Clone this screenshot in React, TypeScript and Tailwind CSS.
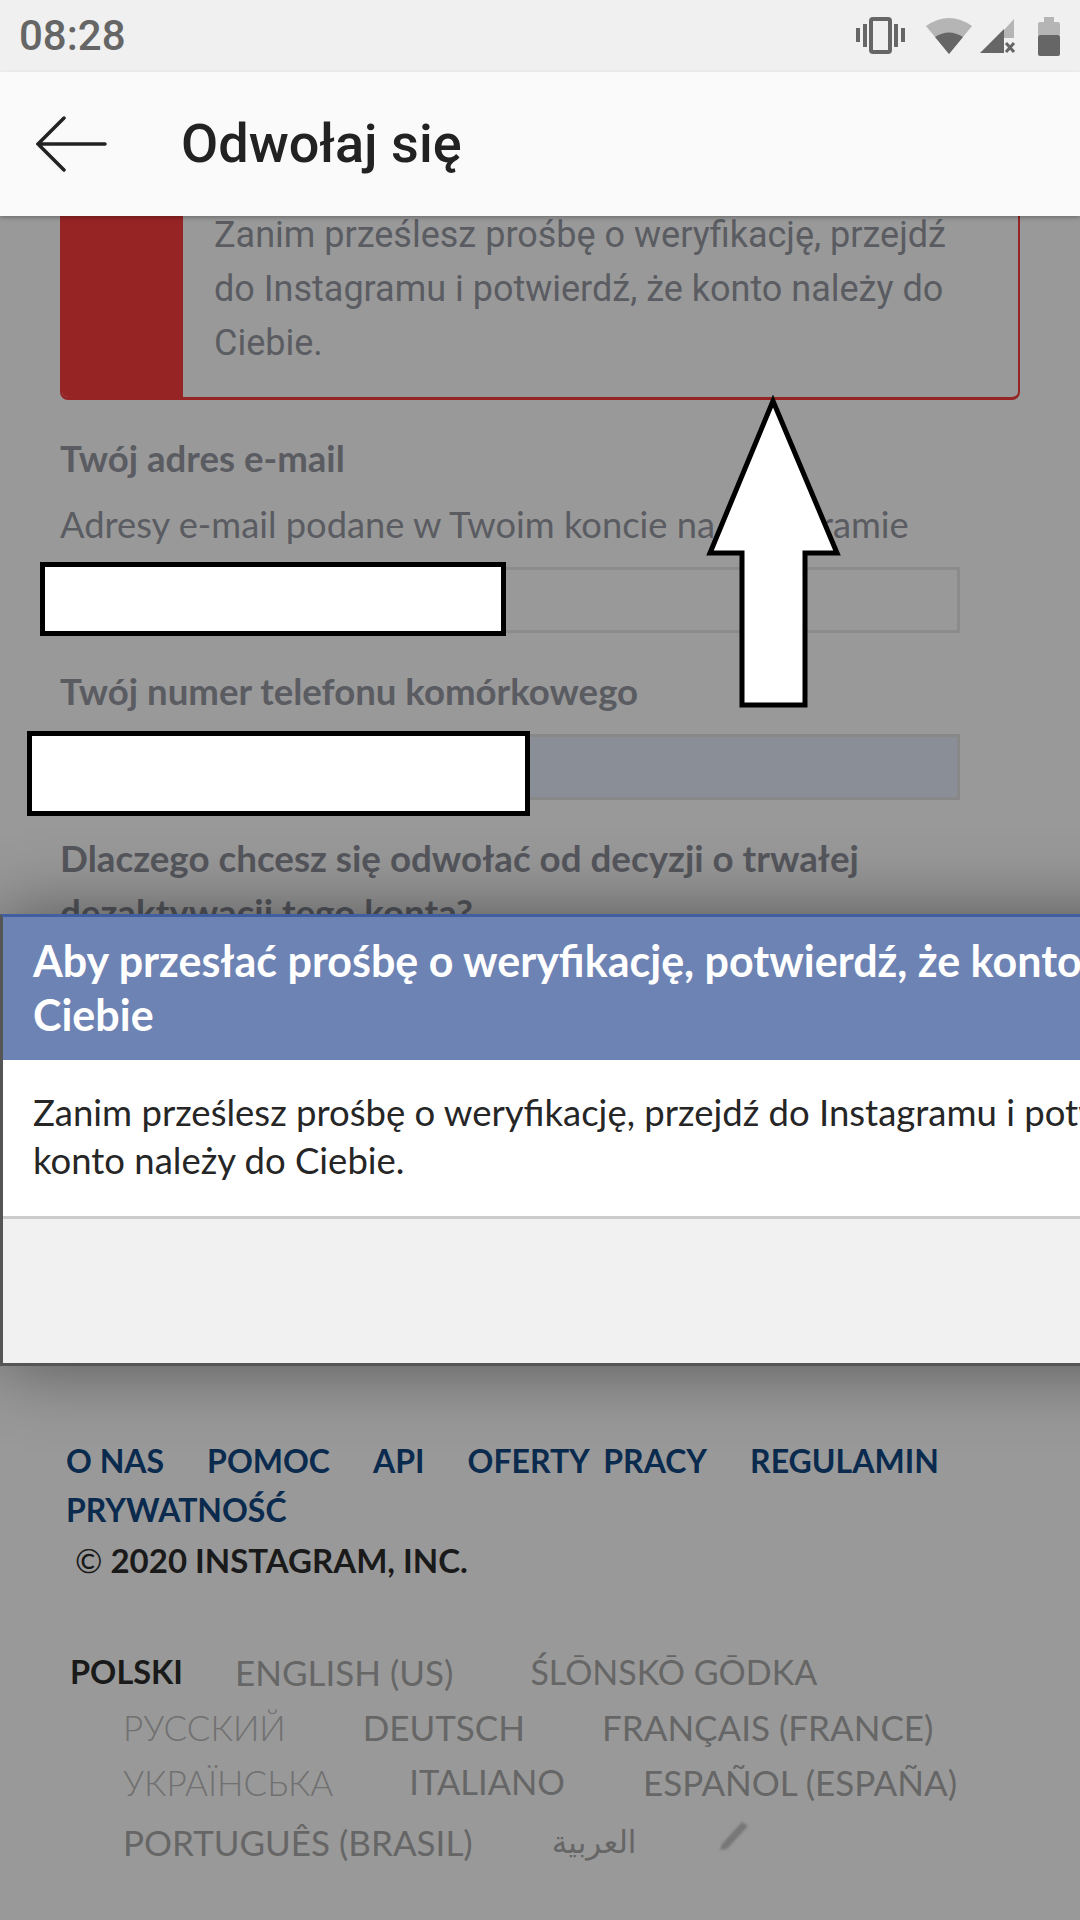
const proxima = "font-['Lato','Liberation_Sans',sans-serif]";

function VibrateIcon() {
  return (
    <svg width="50" height="38" viewBox="0 0 50 38" className="block">
      <rect x="15" y="2" width="19" height="33" rx="2" fill="none" stroke="#666" strokeWidth="4" />
      <rect x="0" y="11" width="4" height="14" fill="#666" />
      <rect x="7" y="7" width="4" height="23" fill="#666" />
      <rect x="38" y="7" width="4" height="23" fill="#666" />
      <rect x="45" y="11" width="4" height="14" fill="#666" />
    </svg>
  );
}

function WifiIcon() {
  return (
    <svg width="46" height="38" viewBox="0 0 46 38" className="block">
      <path d="M0 9 Q23 -7 46 9 L23 37 Z" fill="#b5b5b5" />
      <path d="M9 20 Q23 11 37 20 L23 37 Z" fill="#666" />
    </svg>
  );
}

function SignalIcon() {
  return (
    <svg width="36" height="36" viewBox="0 0 36 36" className="block">
      <path d="M24 12 L34 1 L34 20 L24 20 Z" fill="#b5b5b5" />
      <path d="M0 35 L24 11 L24 35 Z" fill="#666" />
      <path d="M26 25 L34 34 M34 25 L26 34" stroke="#666" strokeWidth="3" />
    </svg>
  );
}

function BatteryIcon() {
  return (
    <svg width="22" height="39" viewBox="0 0 22 39" className="block">
      <rect x="6" y="0" width="10" height="6" fill="#b5b5b5" />
      <rect x="0" y="5" width="22" height="14" rx="2" fill="#b5b5b5" />
      <rect x="0" y="18" width="22" height="21" rx="2" fill="#666" />
    </svg>
  );
}

function BackArrow() {
  return (
    <svg width="72" height="56" viewBox="0 0 72 56" className="block">
      <path
        d="M69 28 H2 M28 2 L2 28 L28 54"
        fill="none"
        stroke="#222"
        strokeWidth="3.5"
        strokeLinecap="round"
      />
    </svg>
  );
}

function Pencil() {
  return (
    <svg width="32" height="32" viewBox="0 0 32 32" className="block blur-[1px]">
      <path d="M2 30 L4 24 L24 2 L30 6 L9 29 Z" fill="#777" />
    </svg>
  );
}

const footerLinks = ["O NAS", "POMOC", "API", "OFERTY PRACY", "REGULAMIN"];

export default function App() {
  return (
    <div className={`relative w-[1080px] h-[1920px] overflow-hidden flex flex-col bg-[#999] ${proxima}`}>
      {/* status bar */}
      <div className="h-[72px] shrink-0 bg-[#f0f0f0] flex items-center justify-between pl-[19px] pr-[20px] font-['Roboto',sans-serif] relative z-20">
        <span className="text-[42px] leading-none text-[#666] font-medium">08:28</span>
        <div className="flex items-center">
          <VibrateIcon />
          <div className="flex items-center gap-[8px] ml-[20px]">
            <WifiIcon />
            <SignalIcon />
          </div>
          <div className="ml-[22px]">
            <BatteryIcon />
          </div>
        </div>
      </div>

      {/* app bar */}
      <div className="h-[144px] shrink-0 bg-[#fafafa] flex items-center pl-[36px] font-['Roboto',sans-serif] relative z-20 shadow-[0_2px_4px_rgba(0,0,0,0.25)]">
        <BackArrow />
        <h1 className="ml-[73px] text-[54px] font-medium text-[#222] leading-none">Odwołaj się</h1>
      </div>

      {/* page behind the dialog */}
      <div className="flex-1 overflow-hidden px-[60px]">
        <div className="w-[960px] h-[184px] flex border-2 border-t-0 border-b-[3px] border-[#962424] rounded-b-[8px] overflow-hidden">
          <div className="w-[121px] bg-[#962424] shrink-0" />
          <p className="ml-[31px] w-[760px] text-[36px] leading-[54px] text-[#5a5c62] font-['Roboto',sans-serif] -mt-[8px]">
            Zanim prześlesz prośbę o weryfikację, przejdź do Instagramu i potwierdź, że konto należy do Ciebie.
          </p>
        </div>

        <h2 className="mt-[38px] text-[36.6px] leading-[40px] font-bold text-[#5a5c62]">Twój adres e-mail</h2>
        <p className="mt-[26px] text-[36.3px] leading-[40px] text-[#5a5c62] whitespace-nowrap">
          Adresy e-mail podane w Twoim koncie na Instagramie
        </p>
        <div className="mt-[23px] w-[900px] h-[66px] border-[3px] border-[#8b8b8b]" />

        <h2 className="mt-[38px] text-[36.6px] leading-[40px] font-bold text-[#5a5c62]">Twój numer telefonu komórkowego</h2>
        <div className="mt-[23px] w-[900px] h-[66px] border-[3px] border-[#888] bg-[#8a8e97]" />

        <h2 className="mt-[31px] w-[900px] text-[36.75px] leading-[54px] font-bold text-[#55575d]">
          Dlaczego chcesz się odwołać od decyzji o trwałej dezaktywacji tego konta?
        </h2>
      </div>

      {/* footer, pinned under the dialog */}
      <div className="absolute left-0 top-[1440px] w-full pl-[66px]">
        <div className="flex gap-[43px] text-[32px] leading-[42px] font-bold text-[#0a2a4e]">
          {footerLinks.map((link) => (
            <span key={link} className={link === "OFERTY PRACY" ? "[word-spacing:7px]" : ""}>
              {link}
            </span>
          ))}
        </div>
        <div className="mt-[7px] text-[32px] leading-[42px] font-bold text-[#0a2a4e]">PRYWATNOŚĆ</div>
        <div className="mt-[8px] ml-[9px] text-[33px] leading-[42px] font-bold text-[#1a1a1a]">
          <span className="font-normal">©</span> 2020 INSTAGRAM, INC.
        </div>

        <div className="mt-[69px] ml-[4px] text-[35px] leading-[44px] text-[#666]">
          <div className="flex">
            <span className="font-bold text-[32.5px] text-[#1a1a1a]">POLSKI</span>
            <span className="ml-[52px]">ENGLISH (US)</span>
            <span className="ml-[77px] text-[34px]">ŚLŌNSKŌ GŌDKA</span>
          </div>
          <div className="flex mt-[11px] ml-[53px]">
            <span className="font-light text-[#707070]">РУССКИЙ</span>
            <span className="ml-[77px]">DEUTSCH</span>
            <span className="ml-[77px]">FRANÇAIS (FRANCE)</span>
          </div>
          <div className="flex mt-[11px] ml-[53px]">
            <span className="font-light text-[#707070]">УКРАЇНСЬКА</span>
            <span className="ml-[76px] text-[34.5px]">ITALIANO</span>
            <span className="ml-[78px]">ESPAÑOL (ESPAÑA)</span>
          </div>
          <div className="flex items-center mt-[16px] ml-[53px]">
            <span>PORTUGUÊS (BRASIL)</span>
            <span className="ml-[79px] font-['DejaVu_Sans',sans-serif] text-[31px]">العربية</span>
            <span className="ml-[82px] -mt-[12px]">
              <Pencil />
            </span>
          </div>
        </div>
      </div>

      {/* dialog */}
      <div className="absolute left-0 top-[914px] w-[1300px] z-10 border-[3px] border-r-0 border-[#555] border-t-[#3f5fa0] bg-white shadow-[0_0_70px_rgba(0,0,0,0.45)]">
        <div className="h-[143px] bg-[#6d83b4] pl-[30px] pt-[17px] text-[43px] leading-[54px] font-bold text-white whitespace-nowrap">
          Aby przesłać prośbę o weryfikację, potwierdź, że konto należy do
          <br />
          Ciebie
        </div>
        <div className="h-[156px] bg-white pl-[30px] pt-[28px] text-[36.5px] leading-[48px] text-[#262626] whitespace-nowrap">
          Zanim prześlesz prośbę o weryfikację, przejdź do Instagramu i potwierdź, że
          <br />
          konto należy do Ciebie.
        </div>
        <div className="h-[147px] bg-[#f1f1f1] border-t-[3px] border-[#ccc]" />
      </div>

      {/* redaction boxes + arrow drawn on top of the screenshot */}
      <div className="absolute z-30 left-[40px] top-[562px] w-[466px] h-[74px] bg-white border-[5px] border-black" />
      <div className="absolute z-30 left-[27px] top-[731px] w-[503px] h-[85px] bg-white border-[5px] border-black" />
      <svg width="140" height="320" viewBox="0 0 140 320" className="absolute z-30 left-[703px] top-[395px]">
        <path
          d="M70 6 L7 158 L39 158 L39 310 L102 310 L102 158 L134 158 Z"
          fill="#fff"
          stroke="#000"
          strokeWidth="5"
        />
      </svg>
    </div>
  );
}
